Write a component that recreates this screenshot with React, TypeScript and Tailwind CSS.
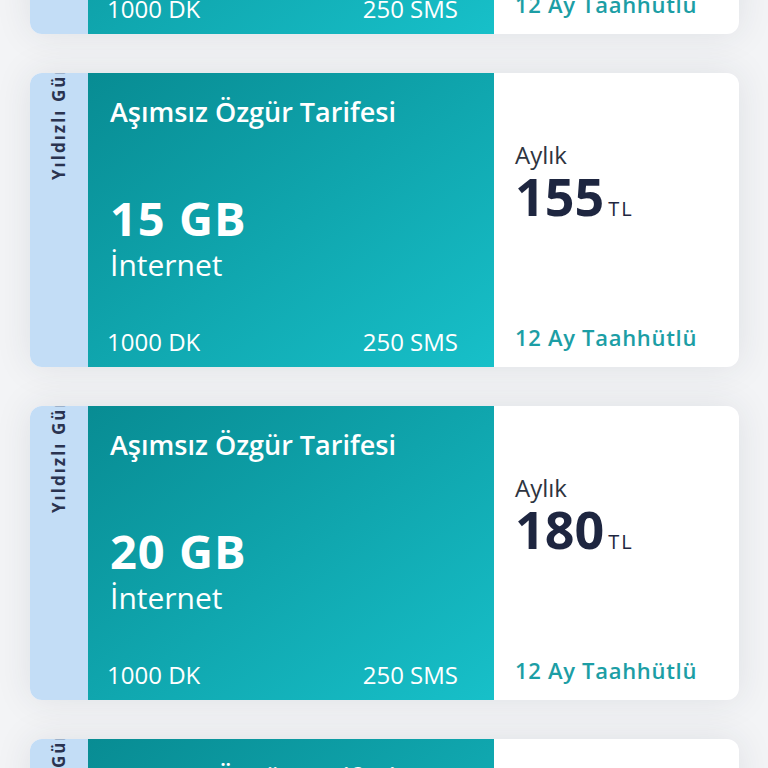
import React from 'react';

interface Plan {
  gb: number;
  price: number;
}

const plans: Plan[] = [
  { gb: 10, price: 130 },
  { gb: 15, price: 155 },
  { gb: 20, price: 180 },
  { gb: 25, price: 205 },
];

const PlanCard: React.FC<{ plan: Plan }> = ({ plan }) => {
  return (
    <div className="flex h-[294px] shrink-0 overflow-hidden rounded-[12px] bg-white shadow-[0_0_36px_rgba(40,50,70,0.10)]">
      {/* Campaign tag */}
      <div className="flex w-[58px] shrink-0 flex-col items-center justify-end overflow-hidden bg-[#c3ddf6] pb-[187px]">
        <span className="rotate-180 whitespace-nowrap text-[17px] font-bold tracking-[2px] text-[#2a3350] [writing-mode:vertical-rl]">
          Yıldızlı Günler Kampanyası
        </span>
      </div>

      {/* Plan details */}
      <div className="flex w-[406px] shrink-0 flex-col bg-gradient-to-br from-[#088c93] to-[#17c0c9] pl-[22px] pr-[36px] pt-[24px] pb-[10px] text-white">
        <div className="text-[27px] font-semibold leading-[30px]">Aşımsız Özgür Tarifesi</div>
        <div className="mt-[65px] text-[47px] font-bold leading-[52px] tracking-[1px]">{plan.gb} GB</div>
        <div className="mt-[3px] text-[30px] leading-[36px]">İnternet</div>
        <div className="mt-auto flex items-center justify-between text-[24px] leading-[30px]">
          <span className="-ml-[3px]">1000 DK</span>
          <span>250 SMS</span>
        </div>
      </div>

      {/* Price */}
      <div className="flex flex-1 flex-col pl-[21px] pt-[68px] pb-[16px]">
        <div className="text-[24px] leading-[28px] text-[#2e3440]">Aylık</div>
        <div className="flex items-baseline text-[#1e2640]">
          <span className="text-[52px] font-bold leading-[54px]">{plan.price}</span>
          <span className="ml-[4px] text-[20px] tracking-[2px]">TL</span>
        </div>
        <div className="mt-auto text-[22px] font-semibold leading-[28px] tracking-[0.7px] text-[#1c9ea5]">
          12 Ay Taahhütlü
        </div>
      </div>
    </div>
  );
};

const App: React.FC = () => {
  return (
    <div
      className="h-[768px] overflow-hidden bg-[#f3f4f6]"
      style={{ fontFamily: '"Open Sans", Lato, sans-serif' }}
    >
      <div className="-mt-[260px] flex flex-col gap-[39px] pl-[30px] pr-[29px]">
        {plans.map((plan) => (
          <PlanCard key={plan.gb} plan={plan} />
        ))}
      </div>
    </div>
  );
};

export default App;
